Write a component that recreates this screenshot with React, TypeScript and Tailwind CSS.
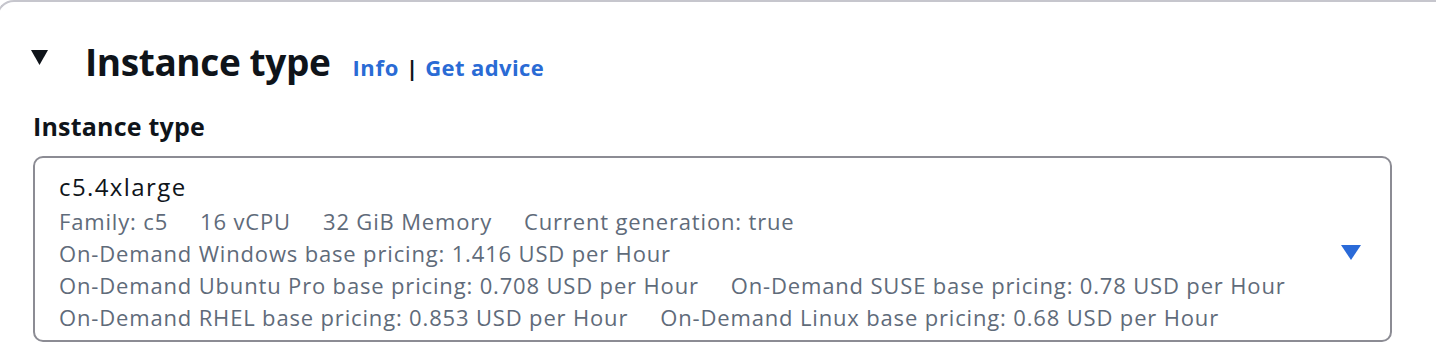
export default function App() {
  const font = { fontFamily: '"Open Sans", "Noto Sans", sans-serif' };
  return (
    <div className="h-[350px] w-[1436px] overflow-hidden bg-white" style={font}>
      <div className="ml-[-4px] h-[400px] rounded-tl-[18px] border-l-2 border-t-2 border-[#c6c6cd] pl-[35px] pt-[38px]">
        {/* header */}
        <div className="flex items-start">
          <svg width="17" height="15" viewBox="0 0 17 15" className="ml-[-2px] mr-[37px] mt-[10px] shrink-0">
            <path d="M0 0h17L8.5 15z" fill="#0f141a" />
          </svg>
          <div className="flex items-baseline">
            <h2 className="text-[37px] font-bold leading-[44px] tracking-[-0.4px] text-[#0f141a]">Instance type</h2>
            <div className="ml-[22px] flex items-baseline text-[22px] font-bold leading-[30px]">
              <span className="tracking-[0.7px] text-[#2a6bd5]">Info</span>
              <span className="ml-[7px] mr-[7px] text-[#0f141a]">|</span>
              <span className="tracking-[0.4px] text-[#2a6bd5]">Get advice</span>
            </div>
          </div>
        </div>

        {/* field label */}
        <div className="mt-[26px] text-[25px] font-bold leading-[32px] tracking-[0.2px] text-[#0f141a]">Instance type</div>

        {/* select trigger */}
        <div className="mt-[14px] flex w-[1359px] items-center rounded-[10px] border-2 border-[#8c8c94] pb-[7px] pl-[24px] pr-[29px] pt-[13px]">
          <div className="flex-1">
            <div className="text-[24px] leading-[32px] tracking-[1.4px] text-[#0f141a]">c5.4xlarge</div>
            <div className="mt-[2px] text-[22px] leading-[32px] tracking-[0.84px] text-[#5f6b7a]">
              <div className="flex gap-x-[32px]">
                <span>Family: c5</span>
                <span>16 vCPU</span>
                <span>32 GiB Memory</span>
                <span>Current generation: true</span>
              </div>
              <div>On-Demand Windows base pricing: 1.416 USD per Hour</div>
              <div className="flex gap-x-[32px]">
                <span>On-Demand Ubuntu Pro base pricing: 0.708 USD per Hour</span>
                <span>On-Demand SUSE base pricing: 0.78 USD per Hour</span>
              </div>
              <div className="flex gap-x-[32px]">
                <span>On-Demand RHEL base pricing: 0.853 USD per Hour</span>
                <span>On-Demand Linux base pricing: 0.68 USD per Hour</span>
              </div>
            </div>
          </div>
          <svg width="20" height="15" viewBox="0 0 20 15" className="shrink-0">
            <path d="M0 0h20L10 15z" fill="#2a6ad8" />
          </svg>
        </div>
      </div>
    </div>
  );
}
